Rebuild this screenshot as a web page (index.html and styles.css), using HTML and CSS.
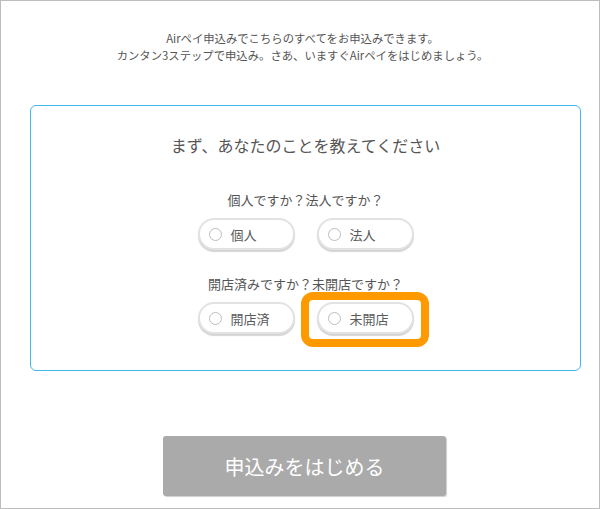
FILE: index.html
```html
<!DOCTYPE html>
<html lang="ja">
<head>
<meta charset="utf-8">
<title>Airペイ申込み</title>
<link rel="stylesheet" href="styles.css">
</head>
<body>
<div class="frame">
  <div class="intro">
    <p>Airペイ申込みでこちらのすべてをお申込みできます。</p>
    <p>カンタン3ステップで申込み。さあ、いますぐAirペイをはじめましょう。</p>
  </div>
  <div class="card">
    <h2 class="card-title">まず、あなたのことを教えてください</h2>
    <p class="question">個人ですか？法人ですか？</p>
    <div class="options">
      <label class="pill"><span class="radio"></span><span class="pill-text">個人</span></label>
      <label class="pill"><span class="radio"></span><span class="pill-text">法人</span></label>
    </div>
    <p class="question q2">開店済みですか？未開店ですか？</p>
    <div class="options">
      <label class="pill"><span class="radio"></span><span class="pill-text">開店済</span></label>
      <label class="pill highlighted"><span class="radio"></span><span class="pill-text">未開店</span><span class="highlight"></span></label>
    </div>
  </div>
  <div class="cta-row">
    <button class="cta">申込みをはじめる</button>
  </div>
</div>
</body>
</html>
```

FILE: styles.css
```css
html, body {
  margin: 0;
  padding: 0;
  background: #fff;
}
body {
  font-family: "Noto Sans CJK JP", "Noto Sans", sans-serif;
  color: #555;
}
.frame {
  width: 600px;
  height: 509px;
  box-sizing: border-box;
  border: 1px solid #bdbdbd;
  overflow: hidden;
}
.intro {
  padding-top: 29px;
  padding-left: 5px;
  text-align: center;
  font-size: 11.35px;
  line-height: 17px;
  color: #555;
}
.intro p {
  margin: 0;
}
.card {
  margin: 41px 18px 0 29px;
  height: 266px;
  box-sizing: border-box;
  border: 1px solid #41b8ec;
  border-radius: 6px;
  padding-top: 27px;
  text-align: center;
}
.card-title {
  margin: 0;
  font-size: 16px;
  line-height: 24px;
  font-weight: normal;
  color: #555;
}
.question {
  margin: 33px 0 8px;
  font-size: 13px;
  line-height: 20px;
}
.question.q2 {
  margin-top: 24px;
}
.options {
  display: flex;
  justify-content: center;
  gap: 22px;
}
.pill {
  position: relative;
  width: 97px;
  height: 32px;
  box-sizing: border-box;
  border: 2px solid #e2e2e2;
  border-radius: 16px;
  box-shadow: 0 2px 1px #d4d4d4;
  background: #fff;
  display: flex;
  align-items: center;
  padding-left: 9px;
  font-size: 13px;
}
.radio {
  width: 13px;
  height: 13px;
  box-sizing: border-box;
  border: 1.5px solid #bdbdbd;
  border-radius: 50%;
  margin-right: 9px;
}
.pill-text {
  color: #5a5a5a;
  line-height: 1;
}
.highlight {
  position: absolute;
  left: -18px;
  top: -12px;
  right: -17px;
  bottom: -15px;
  border: 8px solid #ff9900;
  border-radius: 12px;
}
.cta-row {
  padding-top: 65px;
  padding-left: 162px;
}
.cta {
  display: block;
  width: 283px;
  height: 60px;
  border: none;
  border-radius: 3px;
  background: #aaaaaa;
  box-shadow: 1px 1px 1px #cfcfcf;
  color: #fff;
  font-family: "Noto Sans CJK JP", "Noto Sans", sans-serif;
  font-size: 20px;
  padding: 0;
}
```
